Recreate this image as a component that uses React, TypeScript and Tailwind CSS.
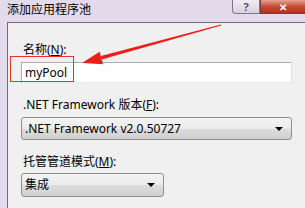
import React from 'react';

const cjk = { fontFamily: '"Noto Sans", "Noto Sans CJK SC", sans-serif' };

function ComboBox({ value, width }: { value: string; width: string }) {
  return (
    <div
      className={`relative flex items-center rounded-[3px] border border-[#8e8f8f] bg-[linear-gradient(#f3f3f3_0%,#ebebeb_50%,#dddddd_51%,#cfcfcf_100%)] pl-[3px] text-[12px] text-black ${width}`}
    >
      <span className="leading-none">{value}</span>
      {/* 下拉三角 */}
      <span className="absolute right-[8px] top-1/2 -translate-y-1/2 h-0 w-0 border-x-[4px] border-t-[4px] border-x-transparent border-t-black" />
    </div>
  );
}

export default function App() {
  return (
    <div
      className="relative h-[208px] w-[305px] overflow-hidden bg-[#e3dbeb]"
      style={cjk}
    >
      {/* 標題列 */}
      <div className="relative flex h-[22px] items-start">
        <span className="pl-[7px] pt-[3px] text-[12px] leading-[14px] text-black">添加应用程序池</span>
        <div className="absolute left-[232px] top-0 flex h-[14px] w-[28px] items-center justify-center rounded-bl-[4px] border border-t-0 border-[#7e7688] bg-[linear-gradient(#f0ecf3,#d8d0e0)] text-[11px] font-bold leading-none text-[#5a5060]">
          ?
        </div>
        <div className="absolute left-[260px] top-0 flex h-[14px] w-[45px] items-center justify-center border-b border-l border-[#7a3a3a] bg-[linear-gradient(#e8a493,#c74a36_50%,#b8301c)] text-[10px] font-bold leading-none text-white">
          ✕
        </div>
      </div>

      {/* 內容區 */}
      <div className="ml-[7px] h-[186px] border-l border-t border-[#6e6e6e] bg-[#f0f0f0] pl-[13px] pt-[19px]">
        <div className="pl-[2px] text-[12px] leading-[15px] text-black">
          名称(<span className="underline">N</span>):
        </div>
        <div className="mt-[5px] flex h-[21px] w-[271px] items-center border border-[#abadb3] border-b-[#e3e9ef] border-r-[#dbdfe6] bg-white pl-[3px] text-[12px] text-black">
          myPool
        </div>

        <div className="mt-[14px] pl-[2px] text-[12px] leading-[15px] text-black">
          .NET Framework 版本(<span className="underline">F</span>):
        </div>
        <div className="mt-[5px] h-[23px]">
          <ComboBox value=".NET Framework v2.0.50727" width="h-[23px] w-[271px]" />
        </div>

        <div className="mt-[14px] pl-[2px] text-[12px] leading-[15px] text-black">
          托管管道模式(<span className="underline">M</span>):
        </div>
        <div className="mt-[4px] h-[24px]">
          <ComboBox value="集成" width="h-[24px] w-[143px]" />
        </div>
      </div>

      {/* 紅框標註 */}
      <div className="absolute left-[10px] top-[56px] h-[26px] w-[64px] border border-[#e8342c]" />

      {/* 紅色箭頭 */}
      <svg className="pointer-events-none absolute inset-0" width="305" height="208" viewBox="0 0 305 208">
        <polygon points="101.7,59.4 100.9,56.0 220.9,24.5 221.2,25.5" fill="#ee1f1a" />
        <polygon points="82,63 99.6,51.8 103,64.2" fill="#ee1f1a" />
      </svg>
    </div>
  );
}
